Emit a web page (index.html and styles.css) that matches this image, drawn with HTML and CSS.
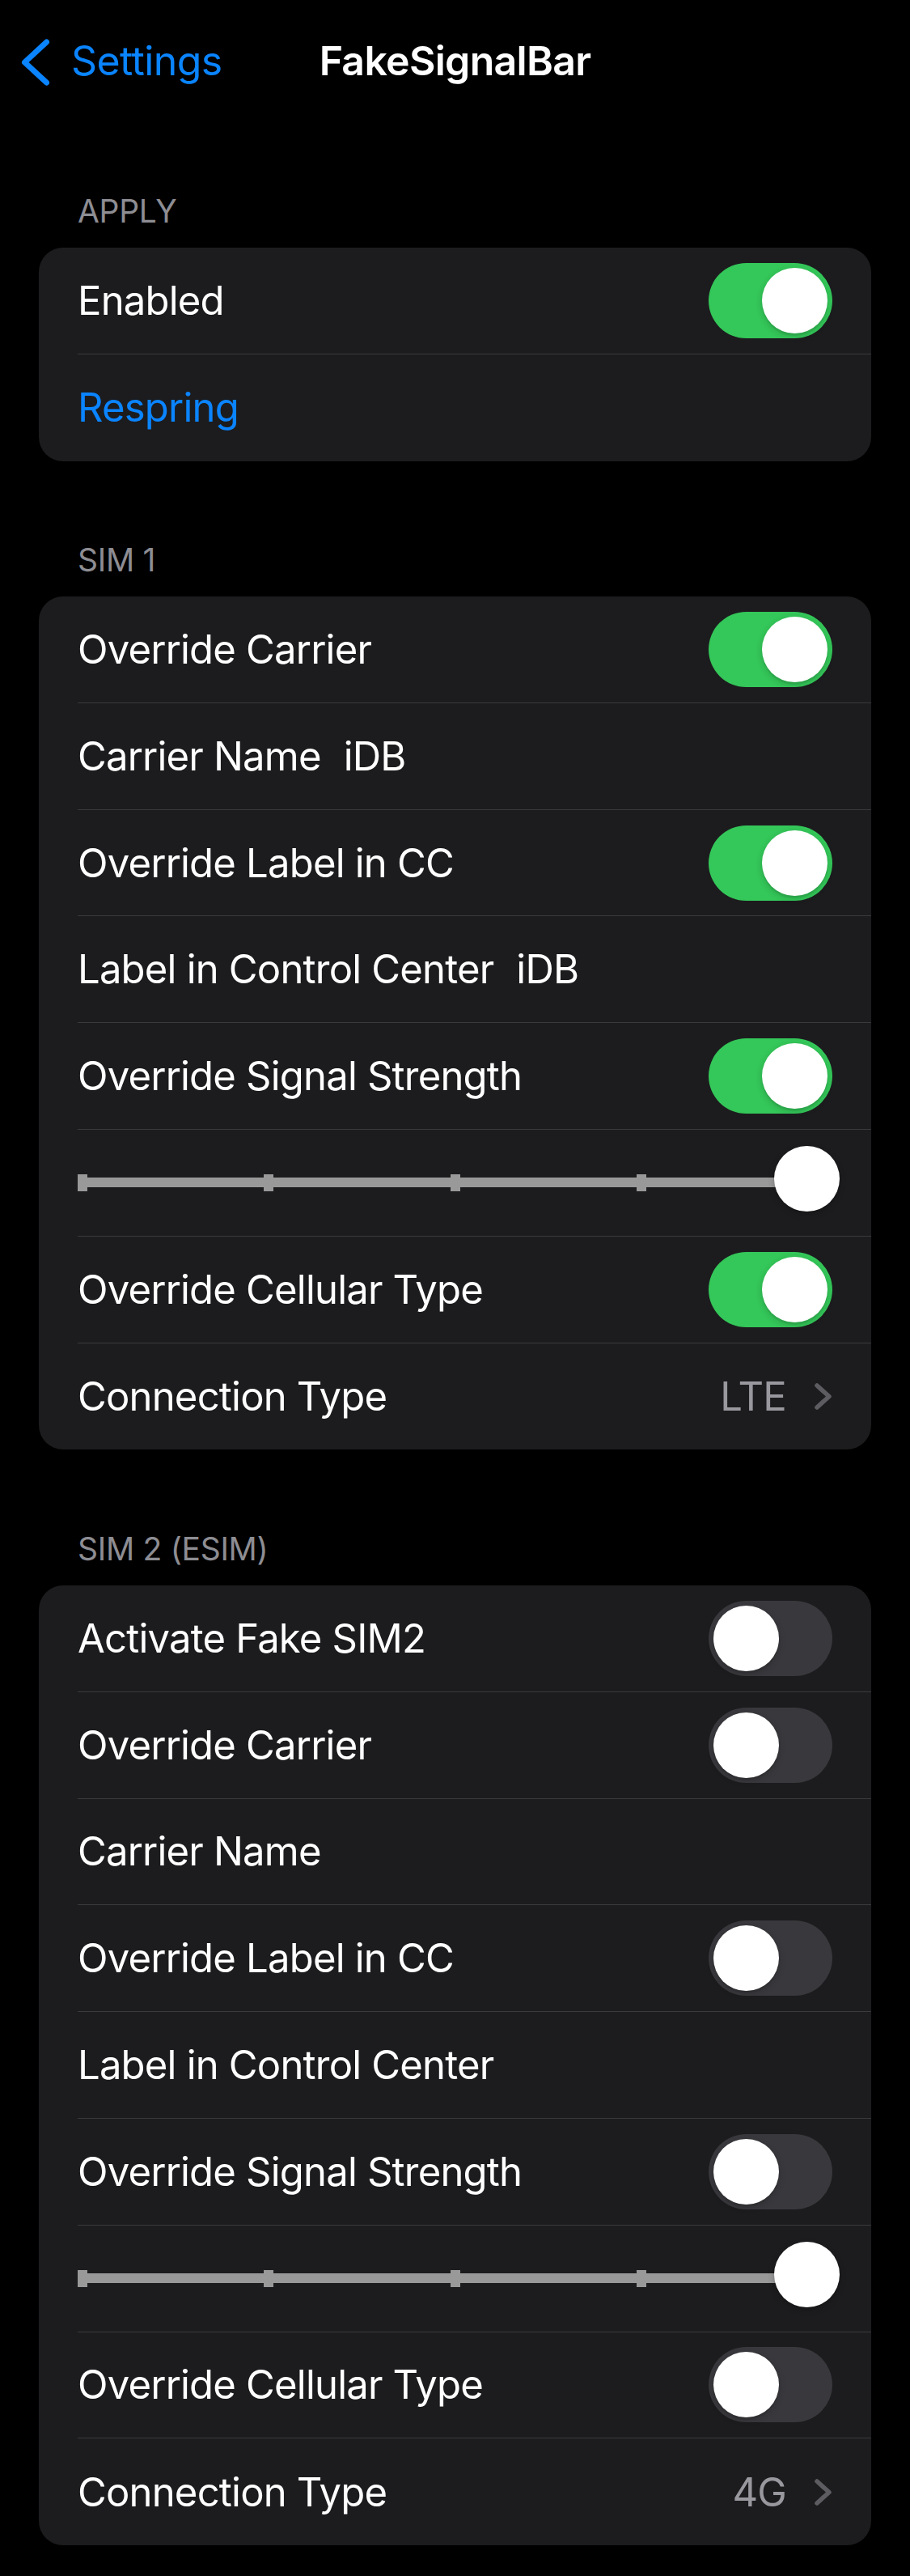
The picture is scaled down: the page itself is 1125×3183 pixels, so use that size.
FILE: index.html
```html
<!DOCTYPE html>
<html lang="en">
<head>
<meta charset="utf-8">
<title>FakeSignalBar</title>
<link rel="stylesheet" href="styles.css">
</head>
<body>
<div class="screen">
  <header class="navbar">
    <a class="back" href="#">
      <svg class="back-chevron" width="40" height="60" viewBox="0 0 40 60" aria-hidden="true">
        <polyline points="33.5,5 6.5,30 33.5,55" fill="none" stroke="currentColor" stroke-width="7" stroke-linecap="round" stroke-linejoin="round"/>
      </svg>
      <span class="back-label">Settings</span>
    </a>
    <h1 class="nav-title">FakeSignalBar</h1>
    <span class="nav-spacer"></span>
  </header>

  <main class="list">
    <section class="group group-first">
      <h2 class="group-header">Apply</h2>
      <div class="card">
        <div class="row"><div class="row-body"><span class="label">Enabled</span><span class="switch on"><span class="knob"></span></span></div></div>
        <div class="row"><div class="row-body"><span class="label link">Respring</span></div></div>
      </div>
    </section>

    <section class="group">
      <h2 class="group-header">SIM 1</h2>
      <div class="card">
        <div class="row"><div class="row-body"><span class="label">Override Carrier</span><span class="switch on"><span class="knob"></span></span></div></div>
        <div class="row"><div class="row-body"><span class="label">Carrier Name</span><span class="field">iDB</span></div></div>
        <div class="row"><div class="row-body"><span class="label">Override Label in CC</span><span class="switch on"><span class="knob"></span></span></div></div>
        <div class="row"><div class="row-body"><span class="label">Label in Control Center</span><span class="field">iDB</span></div></div>
        <div class="row"><div class="row-body"><span class="label">Override Signal Strength</span><span class="switch on"><span class="knob"></span></span></div></div>
        <div class="row"><div class="row-body">
          <div class="slider">
            <span class="tick"></span><span class="tick"></span><span class="tick"></span><span class="tick"></span><span class="tick"></span>
            <span class="thumb"></span>
          </div>
        </div></div>
        <div class="row"><div class="row-body"><span class="label">Override Cellular Type</span><span class="switch on"><span class="knob"></span></span></div></div>
        <div class="row"><div class="row-body"><span class="label">Connection Type</span><span class="value">LTE</span>
          <svg class="disclosure" width="23" height="35" viewBox="0 0 23 35" aria-hidden="true"><polyline points="4,4 19,17.5 4,31" fill="none" stroke="currentColor" stroke-width="5.5" stroke-linecap="round" stroke-linejoin="round"/></svg>
        </div></div>
      </div>
    </section>

    <section class="group">
      <h2 class="group-header">SIM 2 (eSIM)</h2>
      <div class="card">
        <div class="row"><div class="row-body"><span class="label">Activate Fake SIM2</span><span class="switch"><span class="knob"></span></span></div></div>
        <div class="row"><div class="row-body"><span class="label">Override Carrier</span><span class="switch"><span class="knob"></span></span></div></div>
        <div class="row"><div class="row-body"><span class="label">Carrier Name</span></div></div>
        <div class="row"><div class="row-body"><span class="label">Override Label in CC</span><span class="switch"><span class="knob"></span></span></div></div>
        <div class="row"><div class="row-body"><span class="label">Label in Control Center</span></div></div>
        <div class="row"><div class="row-body"><span class="label">Override Signal Strength</span><span class="switch"><span class="knob"></span></span></div></div>
        <div class="row"><div class="row-body">
          <div class="slider">
            <span class="tick"></span><span class="tick"></span><span class="tick"></span><span class="tick"></span><span class="tick"></span>
            <span class="thumb"></span>
          </div>
        </div></div>
        <div class="row"><div class="row-body"><span class="label">Override Cellular Type</span><span class="switch"><span class="knob"></span></span></div></div>
        <div class="row"><div class="row-body"><span class="label">Connection Type</span><span class="value">4G</span>
          <svg class="disclosure" width="23" height="35" viewBox="0 0 23 35" aria-hidden="true"><polyline points="4,4 19,17.5 4,31" fill="none" stroke="currentColor" stroke-width="5.5" stroke-linecap="round" stroke-linejoin="round"/></svg>
        </div></div>
      </div>
    </section>
  </main>
</div>
</body>
</html>
```

FILE: styles.css
```css
html, body {
  margin: 0;
  padding: 0;
  background: #000;
}

body {
  font-family: Inter, "Noto Sans", "Liberation Sans", sans-serif;
  color: #fff;
  -webkit-font-smoothing: antialiased;
}

.screen {
  width: 1125px;
  min-height: 3183px;
  background: #000;
}

/* ---------- navigation bar ---------- */
.navbar {
  display: grid;
  grid-template-columns: 1fr auto 1fr;
  align-items: center;
  padding-top: 43px;
  height: 61px;
}

.back {
  display: flex;
  align-items: center;
  color: #0a84ff;
  text-decoration: none;
  padding-left: 24px;
  font-size: 50px;
  line-height: 61px;
  letter-spacing: -0.6px;
}

.back-chevron {
  display: block;
  margin-top: 4px;
  margin-right: 24px;
}

.nav-title {
  margin: 0;
  font-size: 50px;
  line-height: 61px;
  font-weight: 600;
  letter-spacing: -0.7px;
  color: #fff;
}

/* ---------- grouped list ---------- */
.list {
  padding: 0 48px;
}

.group {
  margin-top: 98.5px;
}

.group-first {
  margin-top: 133px;
}

.group-header {
  margin: 0;
  padding: 0 0 21px 48px;
  font-size: 39px;
  line-height: 48px;
  font-weight: 400;
  text-transform: uppercase;
  color: #8d8d93;
  letter-spacing: -0.3px;
}

.card {
  background: #1c1c1e;
  border-radius: 30px;
  overflow: hidden;
}

.row {
  padding-left: 48px;
}

.row-body {
  box-sizing: border-box;
  height: 131.8px;
  display: flex;
  align-items: center;
  padding-right: 48px;
  border-bottom: 1px solid #3a3a3d;
}

.row:last-child .row-body {
  border-bottom: 0;
}

.label,
.field,
.value {
  font-size: 49px;
  line-height: 61px;
  letter-spacing: -0.8px;
  white-space: nowrap;
}

.label {
  color: #fff;
}

.label.link {
  color: #0a84ff;
}

.field {
  margin-left: 28px;
  color: #fff;
}

.value {
  margin-left: auto;
  color: #98989e;
}

.disclosure {
  display: block;
  margin-left: 34px;
  color: #5c5c61;
}

/* ---------- switch ---------- */
.switch {
  margin-left: auto;
  box-sizing: border-box;
  width: 153px;
  height: 93px;
  border-radius: 46.5px;
  background: #39393d;
  padding: 6px;
  display: flex;
  justify-content: flex-start;
}

.switch.on {
  background: #34c759;
  justify-content: flex-end;
}

.knob {
  width: 81px;
  height: 81px;
  border-radius: 50%;
  background: #fff;
  box-shadow: 0 3px 8px rgba(0, 0, 0, 0.18), 0 3px 1px rgba(0, 0, 0, 0.06);
}

/* ---------- slider ---------- */
.slider {
  position: relative;
  flex: 1;
  height: 21px;
  display: flex;
  justify-content: space-between;
  align-items: center;
}

.slider::before {
  content: "";
  position: absolute;
  left: 0;
  right: 0;
  top: 4.5px;
  height: 12px;
  background: #999999;
}

.tick {
  position: relative;
  width: 12px;
  height: 21px;
  background: #999999;
}

.thumb {
  position: absolute;
  left: 861px;
  top: -34.5px;
  width: 81px;
  height: 81px;
  border-radius: 50%;
  background: #fff;
  box-shadow: 0 3px 8px rgba(0, 0, 0, 0.2), 0 1px 2px rgba(0, 0, 0, 0.1);
}
```
